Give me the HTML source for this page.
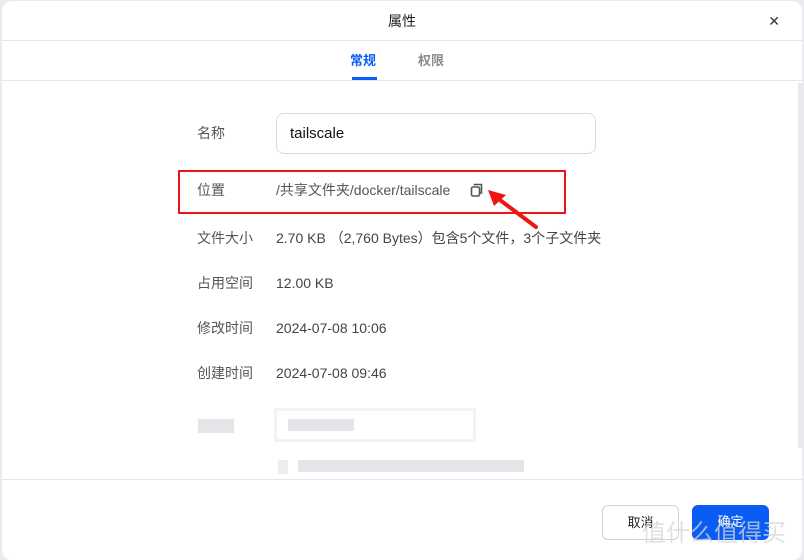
<!DOCTYPE html>
<html><head><meta charset="utf-8"><style>
*{margin:0;padding:0;box-sizing:border-box}
body{width:804px;height:560px;background:#e9ebee;font-family:"Liberation Sans","Noto Sans CJK SC",sans-serif;position:relative;overflow:hidden}
.dlg{position:absolute;left:2px;top:1px;width:800px;height:559px;background:#fff;border-radius:10px;overflow:hidden}
.title{position:absolute;top:0;left:0;right:0;height:40px;border-bottom:1px solid #e5e6e8;text-align:center;line-height:40px;font-size:14px;color:#222}
.close{position:absolute;right:22px;top:0;font-size:14px;color:#333}
.tabs{position:absolute;top:41px;left:0;right:0;height:39px;border-bottom:1px solid #e8e9eb}
.tab{position:absolute;top:8px;font-size:13px;font-weight:bold}
.ul{position:absolute;left:350px;top:35px;width:25px;height:3px;background:#0a5cf5}
.row{position:absolute;left:195px;font-size:14px;color:#555;line-height:18px}
.val{position:absolute;left:274px;font-size:14px;color:#444;white-space:nowrap;line-height:18px}
.inp{position:absolute;left:274px;top:112px;width:320px;height:41px;border:1px solid #d8dadd;border-radius:8px;padding-left:13px;line-height:39px;font-size:15px;color:#111}
.red{position:absolute;left:176px;top:169px;width:388px;height:44px;border:2px solid #f01515}
.foot{position:absolute;left:0;right:0;top:478px;border-top:1px solid #e5e6e8}
.btn{position:absolute;top:504px;width:77px;height:35px;border-radius:6px;font-size:13px;text-align:center;line-height:33px}
.blur{position:absolute;background:#e4e5e8}
.sb{position:absolute;right:0;top:82px;width:4px;height:365px;background:#e9e9e9}
</style></head><body>
<div class="dlg">
<div class="title">属性<span class="close">✕</span></div>
<div class="tabs">
<span class="tab" style="left:348px;color:#0a5cf5">常规</span>
<span class="tab" style="left:416px;color:#8a8a8a">权限</span>
<div class="ul"></div>
</div>
<div class="row" style="top:123px">名称</div>
<div class="inp">tailscale</div>
<div class="red"></div>
<div class="row" style="top:180px">位置</div>
<div class="val" style="top:180px;color:#555">/共享文件夹/docker/tailscale</div>
<svg style="position:absolute;left:468px;top:182px" width="14" height="14" viewBox="0 0 14 14" fill="none" stroke="#555" stroke-width="1.6"><rect x="1.5" y="4" width="8" height="9" rx="1.5"/><path d="M4.5 2.5V1.5h7v8.5h-1.5"/></svg>
<svg style="position:absolute;left:480px;top:182px" width="60" height="50" viewBox="0 0 60 50"><path d="M54 44L14 14" stroke="#f01515" stroke-width="4" stroke-linecap="round"/><path d="M6 7L24 12L12 23Z" fill="#f01515"/></svg>
<div class="row" style="top:228px">文件大小</div>
<div class="val" style="top:228px">2.70 KB （2,760 Bytes）包含5个文件，3个子文件夹</div>
<div class="row" style="top:273px">占用空间</div>
<div class="val" style="top:273px">12.00 KB</div>
<div class="row" style="top:318px">修改时间</div>
<div class="val" style="top:318px">2024-07-08 10:06</div>
<div class="row" style="top:363px">创建时间</div>
<div class="val" style="top:363px">2024-07-08 09:46</div>
<div class="blur" style="left:196px;top:418px;width:36px;height:14px"></div>
<div style="position:absolute;left:272px;top:407px;width:202px;height:34px;border:3px solid #f3f3f4"></div>
<div class="blur" style="left:286px;top:418px;width:66px;height:12px"></div>
<div class="blur" style="left:276px;top:459px;width:10px;height:14px;background:#eeeeef"></div>
<div class="blur" style="left:296px;top:459px;width:226px;height:12px"></div>
<div class="foot"></div>
<div class="sb"></div>
<div class="btn" style="left:600px;border:1px solid #cfd2d6;color:#222">取消</div>
<div class="btn" style="left:690px;background:#0a5cf5;color:#fff">确定</div>
<div style="position:absolute;left:640px;top:512px;font-size:24px;color:rgba(215,215,215,.75)">值什么值得买</div>
</div>
</body></html>
